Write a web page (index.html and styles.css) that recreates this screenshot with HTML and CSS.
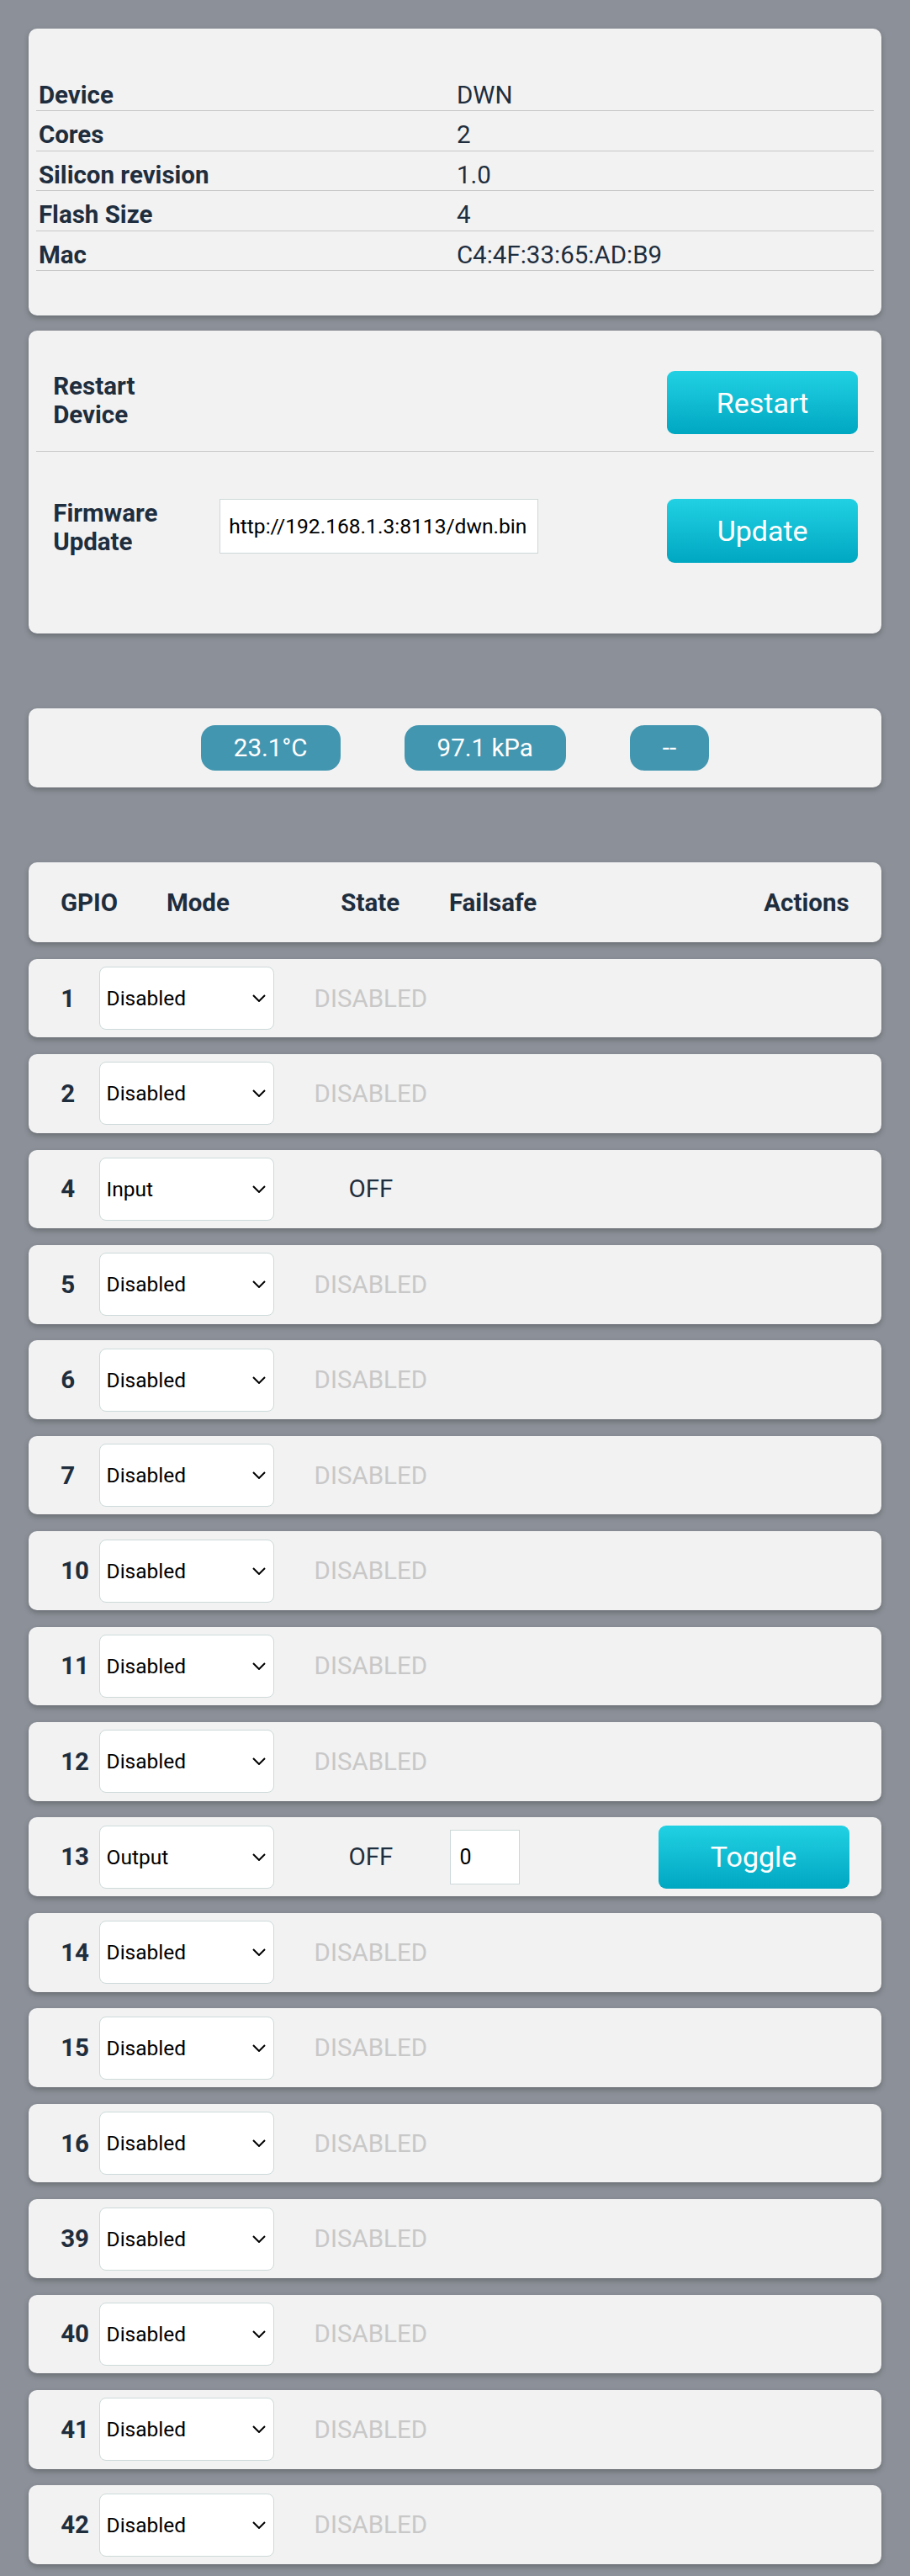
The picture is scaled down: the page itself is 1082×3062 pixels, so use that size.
FILE: index.html
```html
<!DOCTYPE html>
<html lang="en">
<head>
<meta charset="utf-8">
<title>Device</title>
<link rel="stylesheet" href="styles.css">
</head>
<body>
<section class="card info">
  <table class="info-table">
    <colgroup><col class="col-label"><col class="col-value"></colgroup>
    <tr><td class="lbl">Device</td><td>DWN</td></tr>
    <tr><td class="lbl">Cores</td><td>2</td></tr>
    <tr><td class="lbl">Silicon revision</td><td>1.0</td></tr>
    <tr><td class="lbl">Flash Size</td><td>4</td></tr>
    <tr><td class="lbl">Mac</td><td>C4:4F:33:65:AD:B9</td></tr>
  </table>
</section>

<section class="card actions">
  <div class="act-row act-row1">
    <div class="act-label">Restart Device</div>
    <button class="btn">Restart</button>
  </div>
  <div class="act-row act-row2">
    <div class="act-label">Firmware Update</div>
    <input class="url" type="text" value="http://192.168.1.3:8113/dwn.bin">
    <button class="btn">Update</button>
  </div>
</section>

<section class="card sensors">
  <span class="pill">23.1°C</span>
  <span class="pill">97.1 kPa</span>
  <span class="pill">--</span>
</section>

<section class="card gpio-head">
  <span class="h-gpio">GPIO</span>
  <span class="h-mode">Mode</span>
  <span class="h-state">State</span>
  <span class="h-fs">Failsafe</span>
  <span class="h-act">Actions</span>
</section>

<div class="card gpio"><span class="num">1</span><div class="sel-wrap"><select><option selected>Disabled</option><option>Input</option><option>Output</option></select><svg class="chev" width="16" height="9" viewBox="0 0 16 9"><path d="M1 1 L8 8 L15 1" fill="none" stroke="#000" stroke-width="2"/></svg></div><span class="state dis">DISABLED</span></div>
<div class="card gpio"><span class="num">2</span><div class="sel-wrap"><select><option selected>Disabled</option><option>Input</option><option>Output</option></select><svg class="chev" width="16" height="9" viewBox="0 0 16 9"><path d="M1 1 L8 8 L15 1" fill="none" stroke="#000" stroke-width="2"/></svg></div><span class="state dis">DISABLED</span></div>
<div class="card gpio"><span class="num">4</span><div class="sel-wrap"><select><option>Disabled</option><option selected>Input</option><option>Output</option></select><svg class="chev" width="16" height="9" viewBox="0 0 16 9"><path d="M1 1 L8 8 L15 1" fill="none" stroke="#000" stroke-width="2"/></svg></div><span class="state on">OFF</span></div>
<div class="card gpio"><span class="num">5</span><div class="sel-wrap"><select><option selected>Disabled</option><option>Input</option><option>Output</option></select><svg class="chev" width="16" height="9" viewBox="0 0 16 9"><path d="M1 1 L8 8 L15 1" fill="none" stroke="#000" stroke-width="2"/></svg></div><span class="state dis">DISABLED</span></div>
<div class="card gpio"><span class="num">6</span><div class="sel-wrap"><select><option selected>Disabled</option><option>Input</option><option>Output</option></select><svg class="chev" width="16" height="9" viewBox="0 0 16 9"><path d="M1 1 L8 8 L15 1" fill="none" stroke="#000" stroke-width="2"/></svg></div><span class="state dis">DISABLED</span></div>
<div class="card gpio"><span class="num">7</span><div class="sel-wrap"><select><option selected>Disabled</option><option>Input</option><option>Output</option></select><svg class="chev" width="16" height="9" viewBox="0 0 16 9"><path d="M1 1 L8 8 L15 1" fill="none" stroke="#000" stroke-width="2"/></svg></div><span class="state dis">DISABLED</span></div>
<div class="card gpio"><span class="num">10</span><div class="sel-wrap"><select><option selected>Disabled</option><option>Input</option><option>Output</option></select><svg class="chev" width="16" height="9" viewBox="0 0 16 9"><path d="M1 1 L8 8 L15 1" fill="none" stroke="#000" stroke-width="2"/></svg></div><span class="state dis">DISABLED</span></div>
<div class="card gpio"><span class="num">11</span><div class="sel-wrap"><select><option selected>Disabled</option><option>Input</option><option>Output</option></select><svg class="chev" width="16" height="9" viewBox="0 0 16 9"><path d="M1 1 L8 8 L15 1" fill="none" stroke="#000" stroke-width="2"/></svg></div><span class="state dis">DISABLED</span></div>
<div class="card gpio"><span class="num">12</span><div class="sel-wrap"><select><option selected>Disabled</option><option>Input</option><option>Output</option></select><svg class="chev" width="16" height="9" viewBox="0 0 16 9"><path d="M1 1 L8 8 L15 1" fill="none" stroke="#000" stroke-width="2"/></svg></div><span class="state dis">DISABLED</span></div>
<div class="card gpio"><span class="num">13</span><div class="sel-wrap"><select><option>Disabled</option><option>Input</option><option selected>Output</option></select><svg class="chev" width="16" height="9" viewBox="0 0 16 9"><path d="M1 1 L8 8 L15 1" fill="none" stroke="#000" stroke-width="2"/></svg></div><span class="state on">OFF</span><input class="fs" type="text" value="0"><button class="btn">Toggle</button></div>
<div class="card gpio"><span class="num">14</span><div class="sel-wrap"><select><option selected>Disabled</option><option>Input</option><option>Output</option></select><svg class="chev" width="16" height="9" viewBox="0 0 16 9"><path d="M1 1 L8 8 L15 1" fill="none" stroke="#000" stroke-width="2"/></svg></div><span class="state dis">DISABLED</span></div>
<div class="card gpio"><span class="num">15</span><div class="sel-wrap"><select><option selected>Disabled</option><option>Input</option><option>Output</option></select><svg class="chev" width="16" height="9" viewBox="0 0 16 9"><path d="M1 1 L8 8 L15 1" fill="none" stroke="#000" stroke-width="2"/></svg></div><span class="state dis">DISABLED</span></div>
<div class="card gpio"><span class="num">16</span><div class="sel-wrap"><select><option selected>Disabled</option><option>Input</option><option>Output</option></select><svg class="chev" width="16" height="9" viewBox="0 0 16 9"><path d="M1 1 L8 8 L15 1" fill="none" stroke="#000" stroke-width="2"/></svg></div><span class="state dis">DISABLED</span></div>
<div class="card gpio"><span class="num">39</span><div class="sel-wrap"><select><option selected>Disabled</option><option>Input</option><option>Output</option></select><svg class="chev" width="16" height="9" viewBox="0 0 16 9"><path d="M1 1 L8 8 L15 1" fill="none" stroke="#000" stroke-width="2"/></svg></div><span class="state dis">DISABLED</span></div>
<div class="card gpio"><span class="num">40</span><div class="sel-wrap"><select><option selected>Disabled</option><option>Input</option><option>Output</option></select><svg class="chev" width="16" height="9" viewBox="0 0 16 9"><path d="M1 1 L8 8 L15 1" fill="none" stroke="#000" stroke-width="2"/></svg></div><span class="state dis">DISABLED</span></div>
<div class="card gpio"><span class="num">41</span><div class="sel-wrap"><select><option selected>Disabled</option><option>Input</option><option>Output</option></select><svg class="chev" width="16" height="9" viewBox="0 0 16 9"><path d="M1 1 L8 8 L15 1" fill="none" stroke="#000" stroke-width="2"/></svg></div><span class="state dis">DISABLED</span></div>
<div class="card gpio"><span class="num">42</span><div class="sel-wrap"><select><option selected>Disabled</option><option>Input</option><option>Output</option></select><svg class="chev" width="16" height="9" viewBox="0 0 16 9"><path d="M1 1 L8 8 L15 1" fill="none" stroke="#000" stroke-width="2"/></svg></div><span class="state dis">DISABLED</span></div>
</body>
</html>
```
FILE: styles.css
```css
* { box-sizing: border-box; }

body {
  margin: 0;
  padding: 34px 34.4px 14px;
  background: #8c9199;
  font-family: Roboto, "Liberation Sans", sans-serif;
  font-size: 29.5px;
  color: #1f2e3e;
}

.card {
  background: #f2f2f2;
  border-radius: 10px;
  box-shadow: 0 3px 6px rgba(0, 0, 0, 0.25);
}

/* info card */
.info {
  padding: 50.8px 8.5px 52.7px;
}
.info-table {
  width: 100%;
  border-collapse: collapse;
  table-layout: fixed;
}
.col-label { width: 497px; }
.info-table td {
  padding: 11px 3px 1px;
  line-height: 34.5px;
  border-bottom: 1px solid #c8c8c8;
  white-space: nowrap;
}
.info-table .lbl { font-weight: 700; }

/* actions card */
.actions {
  margin-top: 18px;
  padding: 0 8.5px;
}
.act-row {
  display: flex;
}
.act-row1 {
  align-items: center;
  padding: 48px 19px 20px 20.3px;
  border-bottom: 1px solid #c8c8c8;
}
.act-row1 .act-label {
  margin-bottom: 5px;
}
.act-row2 {
  align-items: flex-start;
  padding: 56px 19px 84px 20.3px;
}
.act-label {
  width: 170px;
  font-weight: 700;
  line-height: 34px;
}
.url {
  margin-left: 28px;
  width: 379px;
  height: 65px;
  border: 1px solid #cdd8d8;
  border-radius: 0;
  background: #fff;
  padding: 0 10px;
  font-family: Roboto, "Liberation Sans", sans-serif;
  font-size: 24.6px;
  color: #000;
}

.btn {
  margin-left: auto;
  width: 227px;
  height: 75.5px;
  border: none;
  border-radius: 9px;
  background: linear-gradient(#21d1e3, #00a7c1);
  color: #fff;
  font-family: Roboto, "Liberation Sans", sans-serif;
  font-size: 34px;
  padding: 0;
}

/* sensors */
.sensors {
  margin-top: 89.3px;
  display: flex;
  justify-content: center;
  gap: 76px;
  padding: 20px 0 19.7px;
}
.pill {
  display: flex;
  align-items: center;
  height: 54px;
  padding: 0 39px;
  background: #4396b0;
  color: #fff;
  border-radius: 17px;
}

/* gpio header */
.gpio-head {
  margin-top: 89.3px;
  height: 94.7px;
  display: flex;
  align-items: center;
  padding: 0 38px 0 37.5px;
  font-weight: 700;
}
.h-gpio { width: 126px; }
.h-mode { width: 128.7px; }
.h-state { width: 207.3px; padding-left: 20px; text-align: center; }
.h-act { margin-left: auto; }

/* gpio rows */
.gpio {
  margin-top: 19.74px;
  height: 93.7px;
  display: flex;
  align-items: center;
  padding: 0 38px 0 37.8px;
}
.num {
  width: 46px;
  font-weight: 700;
}
.sel-wrap {
  position: relative;
  width: 208px;
  height: 75px;
}
.sel-wrap select {
  appearance: none;
  -webkit-appearance: none;
  width: 100%;
  height: 100%;
  border: 1px solid #cdd9d9;
  border-radius: 8px;
  background: #fff;
  padding: 0 0 0 7.4px;
  font-family: Roboto, "Liberation Sans", sans-serif;
  font-size: 24.5px;
  color: #000;
}
.chev {
  position: absolute;
  right: 10px;
  top: 33px;
  pointer-events: none;
}
.state {
  width: 209.3px;
  padding-left: 20px;
  text-align: center;
}
.state.dis { color: #c8c8c8; }
.state.on { color: #1f2e3e; }
.fs {
  width: 83px;
  height: 65px;
  border: 1px solid #cdd8d8;
  border-radius: 0;
  background: #fff;
  padding: 0 10px;
  font-family: Roboto, "Liberation Sans", sans-serif;
  font-size: 25px;
  color: #000;
}
```
